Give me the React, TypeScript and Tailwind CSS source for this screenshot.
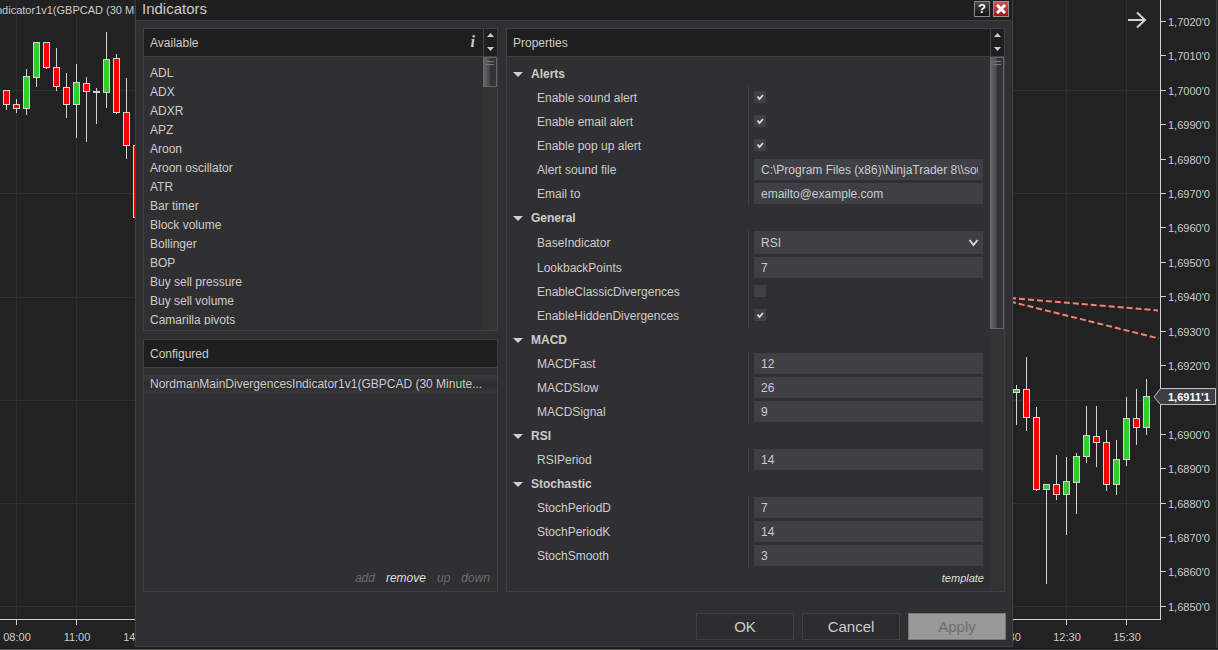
import React, { useState } from 'react';

const AVAILABLE = [
  'ADL',
  'ADX',
  'ADXR',
  'APZ',
  'Aroon',
  'Aroon oscillator',
  'ATR',
  'Bar timer',
  'Block volume',
  'Bollinger',
  'BOP',
  'Buy sell pressure',
  'Buy sell volume',
  'Camarilla pivots',
];

type Field = { id: string; label: string; kind: 'check' | 'text' | 'select' };

const GROUPS: { title: string; fields: Field[] }[] = [
  {
    title: 'Alerts',
    fields: [
      { id: 'soundAlert', label: 'Enable sound alert', kind: 'check' },
      { id: 'emailAlert', label: 'Enable email alert', kind: 'check' },
      { id: 'popupAlert', label: 'Enable pop up alert', kind: 'check' },
      { id: 'soundFile', label: 'Alert sound file', kind: 'text' },
      { id: 'emailTo', label: 'Email to', kind: 'text' },
    ],
  },
  {
    title: 'General',
    fields: [
      { id: 'baseIndicator', label: 'BaseIndicator', kind: 'select' },
      { id: 'lookbackPoints', label: 'LookbackPoints', kind: 'text' },
      { id: 'classicDiv', label: 'EnableClassicDivergences', kind: 'check' },
      { id: 'hiddenDiv', label: 'EnableHiddenDivergences', kind: 'check' },
    ],
  },
  {
    title: 'MACD',
    fields: [
      { id: 'macdFast', label: 'MACDFast', kind: 'text' },
      { id: 'macdSlow', label: 'MACDSlow', kind: 'text' },
      { id: 'macdSignal', label: 'MACDSignal', kind: 'text' },
    ],
  },
  {
    title: 'RSI',
    fields: [{ id: 'rsiPeriod', label: 'RSIPeriod', kind: 'text' }],
  },
  {
    title: 'Stochastic',
    fields: [
      { id: 'stochD', label: 'StochPeriodD', kind: 'text' },
      { id: 'stochK', label: 'StochPeriodK', kind: 'text' },
      { id: 'stochSmooth', label: 'StochSmooth', kind: 'text' },
    ],
  },
];

// x, body top, body bottom, wick top, wick bottom, rising
type Candle = [number, number, number, number, number, boolean];

const CANDLES: Candle[] = [
  [6, 90, 104, 90, 110, false],
  [16, 104, 108, 99, 113, false],
  [26, 76, 108, 69, 115, true],
  [36, 42, 77, 42, 87, true],
  [46, 42, 67, 42, 69, false],
  [56, 67, 86, 48, 91, false],
  [66, 87, 104, 73, 118, false],
  [76, 82, 104, 64, 138, true],
  [86, 83, 91, 77, 142, false],
  [96, 91, 92, 88, 124, true],
  [106, 59, 92, 32, 108, true],
  [116, 58, 112, 54, 114, false],
  [126, 112, 145, 78, 159, false],
  [136, 145, 217, 145, 218, false],
  [1016, 389, 392, 385, 425, true],
  [1026, 389, 417, 357, 431, false],
  [1036, 417, 489, 407, 491, false],
  [1046, 484, 489, 484, 584, true],
  [1056, 484, 494, 455, 500, false],
  [1066, 481, 494, 457, 535, true],
  [1076, 456, 482, 453, 514, true],
  [1086, 435, 456, 406, 463, true],
  [1096, 436, 442, 406, 467, false],
  [1106, 442, 484, 430, 491, false],
  [1116, 459, 484, 440, 495, true],
  [1126, 418, 459, 397, 466, true],
  [1136, 418, 427, 389, 445, false],
  [1146, 396, 427, 379, 435, true],
];

// the 1,6910'0 slot is left blank, the last price marker sits on it
const PRICES = [
  "1,7020'0", "1,7010'0", "1,7000'0", "1,6990'0", "1,6980'0", "1,6970'0",
  "1,6960'0", "1,6950'0", "1,6940'0", "1,6930'0", "1,6920'0", '',
  "1,6900'0", "1,6890'0", "1,6880'0", "1,6870'0", "1,6860'0", "1,6850'0",
];

const TIMES = [
  { x: 16, label: '08:00' },
  { x: 76, label: '11:00' },
  { x: 136, label: '14:00' },
  { x: 1006, label: '09:30' },
  { x: 1066, label: '12:30' },
  { x: 1126, label: '15:30' },
];

function PriceChart() {
  return (
    <svg className="absolute top-0 left-0" width="1218" height="650" viewBox="0 0 1218 650" aria-label="Price chart">
      <g stroke="#2f2f31" shapeRendering="crispEdges">
        {[90, 193, 297, 400, 503, 606].map((y) => (
          <line key={y} x1="0" x2="1160" y1={y + 0.5} y2={y + 0.5} />
        ))}
        {TIMES.map((t) => (
          <line key={t.x} x1={t.x + 0.5} x2={t.x + 0.5} y1="0" y2="617" />
        ))}
      </g>

      <text x="-4" y="14" fontSize="11" fill="#ccc">ndicator1v1(GBPCAD (30 Mi</text>

      <g stroke="#d3d3d3" shapeRendering="crispEdges">
        {CANDLES.map(([x, top, bottom, high, low, up]) => (
          <g key={x}>
            <line x1={x + 0.5} x2={x + 0.5} y1={high} y2={low} />
            <rect x={x - 2.5} y={top + 0.5} width="6" height={bottom - top} fill={up ? '#32cd32' : '#ff0000'} />
          </g>
        ))}
      </g>

      <g stroke="#fa8072" strokeWidth="2" strokeDasharray="6 3">
        <line x1="1010" y1="298" x2="1158" y2="310.5" />
        <line x1="1010" y1="301.5" x2="1159" y2="338.5" />
      </g>

      <path d="M1128 20H1145M1137 12.5L1145 20L1137 27.5" fill="none" stroke="#d3d3d3" strokeWidth="2" />

      <g stroke="#d3d3d3" shapeRendering="crispEdges">
        <path d="M1160.5 0V619.5H0" fill="none" />
        {PRICES.map((p, i) => {
          const y = Math.round(21 + i * 34.4) + 0.5;
          return <line key={i} x1="1161" x2="1166" y1={y} y2={y} />;
        })}
        {TIMES.map((t) => (
          <line key={t.x} x1={t.x + 0.5} x2={t.x + 0.5} y1="620" y2="625" />
        ))}
      </g>
      <g fontSize="11" fill="#ccc">
        {PRICES.map((p, i) => p && (
          <text key={i} x="1168" y={Math.round(26 + i * 34.4)}>{p}</text>
        ))}
        {TIMES.map((t) => (
          <text key={t.x} x={t.x + 1} y="641" textAnchor="middle">{t.label}</text>
        ))}
      </g>

      <path d="M1154 397L1160.5 388.5H1215.5V404.5H1160.5Z" fill="#3f3f46" stroke="#c0c0c0" />
      <text x="1168" y="401" fontSize="11" fontWeight="bold" fill="#fff">1,6911'1</text>

      <g shapeRendering="crispEdges">
        <line x1="1216.5" x2="1216.5" y1="0" y2="650" stroke="#3f3f46" />
        <line x1="0" x2="1218" y1="648.5" y2="648.5" stroke="#1a1a1a" />
        <line x1="0" x2="640" y1="649.5" y2="649.5" stroke="#5a5555" />
        <line x1="640" x2="1218" y1="649.5" y2="649.5" stroke="#3a3a3c" />
      </g>
    </svg>
  );
}

function Spinner() {
  return (
    <div className="flex w-3.5 shrink-0 flex-col items-center justify-between border-l border-[#3f3f46] py-1">
      <button type="button" aria-label="Move up">
        <svg className="block" width="7" height="4"><path d="M3.5 0L7 4H0Z" fill="#ccc" /></svg>
      </button>
      <button type="button" aria-label="Move down" className="mb-px">
        <svg className="block" width="7" height="4"><path d="M3.5 4L7 0H0Z" fill="#ccc" /></svg>
      </button>
    </div>
  );
}

function ScrollTrack({ thumb }: { thumb: string }) {
  return (
    <div className="w-3.5 shrink-0 bg-[#333333]">
      <div className={`flex flex-col items-center gap-0.5 border border-[#66666a] bg-linear-to-r from-[#68686a] from-0% via-[#444446] via-50% to-[#333335] to-50% pt-[3px] ${thumb}`}>
        <span className="h-px w-2 bg-[#777]" />
        <span className="h-px w-2 bg-[#777]" />
      </div>
    </div>
  );
}

function PanelHeader({ title, children }: { title: string; children?: React.ReactNode }) {
  return (
    <div className="flex h-7 shrink-0 border-b border-[#3f3f46] bg-[#1f1f1f] pl-1.5">
      <h2 className="grow leading-7">{title}</h2>
      {children}
    </div>
  );
}

export default function App() {
  const [selected, setSelected] = useState('');
  const [values, setValues] = useState<Record<string, string>>({
    soundFile: 'C:\\Program Files (x86)\\NinjaTrader 8\\\\sounds\\Alert1.wav',
    emailTo: 'emailto@example.com',
    baseIndicator: 'RSI',
    lookbackPoints: '7',
    macdFast: '12',
    macdSlow: '26',
    macdSignal: '9',
    rsiPeriod: '14',
    stochD: '7',
    stochK: '14',
    stochSmooth: '3',
  });
  const [checks, setChecks] = useState<Record<string, boolean>>({
    soundAlert: true,
    emailAlert: true,
    popupAlert: true,
    classicDiv: false,
    hiddenDiv: true,
  });

  const setValue = (id: string, value: string) => setValues({ ...values, [id]: value });

  const renderField = (field: Field) => {
    if (field.kind === 'check') {
      return (
        <span className="relative mb-px block h-3 w-3">
          <input
            id={field.id}
            type="checkbox"
            checked={checks[field.id]}
            onChange={(e) => setChecks({ ...checks, [field.id]: e.target.checked })}
            className="block h-3 w-3 appearance-none bg-[#3f3f46]"
          />
          {checks[field.id] && (
            <svg className="pointer-events-none absolute top-0 left-0" width="12" height="12">
              <path d="M3.5 5.5L5.5 8L9 4" fill="none" stroke="#ddd" strokeWidth="1.8" />
            </svg>
          )}
        </span>
      );
    }
    if (field.kind === 'select') {
      return (
        <span className="relative block w-full">
          <select
            id={field.id}
            value={values[field.id]}
            onChange={(e) => setValue(field.id, e.target.value)}
            className="block h-[23px] w-full appearance-none bg-[#3f3f46] px-[7px] outline-none"
          >
            <option>RSI</option>
            <option>MACD</option>
            <option>Stochastic</option>
          </select>
          <svg className="pointer-events-none absolute top-2 right-1" width="11" height="8">
            <path d="M1.5 1L5.5 6L9.5 1" fill="none" stroke="#d8d8d8" strokeWidth="2" />
          </svg>
        </span>
      );
    }
    return (
      <span className="block w-full bg-[#3f3f46] pr-[5px] pl-[7px]">
        <input
          id={field.id}
          type="text"
          value={values[field.id]}
          onChange={(e) => setValue(field.id, e.target.value)}
          className="block h-[21px] w-full bg-transparent outline-none"
        />
      </span>
    );
  };

  return (
    <main className="relative flex min-h-screen overflow-hidden bg-[#222222] pr-[205px] pb-[3px] pl-[135px] font-['Liberation_Sans',Arial,sans-serif] text-xs text-[#cccccc]">
      <PriceChart />

      <section className="relative flex min-w-0 grow flex-col border-x border-b border-[#3f3f46] bg-[#303032]">
        <header className="flex h-[21px] items-start justify-between border-b border-[#3f3f46] bg-[#1f1f1f] pr-[3px] pl-1.5">
          <h1 className="text-[15px] leading-[18px]">Indicators</h1>
          <div className="flex gap-[3px] pt-px">
            <button type="button" aria-label="Help" className="h-4 w-4 border border-[#8a8a8a] bg-linear-to-b from-[#48484a] to-[#111] text-[13px] leading-[14px] font-bold text-white">
              ?
            </button>
            <button type="button" aria-label="Close" className="flex h-4 w-4 items-center justify-center border border-[#a09090] bg-linear-to-b from-[#d05055] to-[#a81018]">
              <svg width="10" height="10"><path d="M1 1L9 9M9 1L1 9" stroke="#fff" strokeWidth="3" /></svg>
            </button>
          </div>
        </header>

        <div className="grid grow grid-cols-[355fr_499fr] gap-2 px-[7px] pt-[7px]">
          <div className="flex min-w-0 flex-col gap-2">
            <div className="flex h-[303px] flex-col border border-[#3f3f46]">
              <PanelHeader title="Available">
                <button type="button" aria-label="Indicator info" className="px-2 pb-0.5 font-['Liberation_Serif',serif] text-base font-bold italic">
                  i
                </button>
                <Spinner />
              </PanelHeader>
              <div className="flex min-h-0 grow">
                <ul className="mt-[7px] mb-[5px] grow overflow-hidden">
                  {AVAILABLE.map((name) => (
                    <li key={name}>
                      <button
                        type="button"
                        onClick={() => setSelected(name)}
                        className={`block w-full pl-1.5 text-left leading-[19px] ${selected === name ? 'bg-[#3a3a3c]' : ''}`}
                      >
                        {name}
                      </button>
                    </li>
                  ))}
                </ul>
                <ScrollTrack thumb="h-[30px]" />
              </div>
            </div>

            <div className="flex grow flex-col border border-[#3f3f46]">
              <PanelHeader title="Configured" />
              <button type="button" className="mt-[7px] truncate bg-linear-to-b from-[#3a3a3c] via-[#2d2d2f] to-[#39393b] px-1.5 text-left leading-[19px]">
                NordmanMainDivergencesIndicator1v1(GBPCAD (30 Minute...
              </button>
              <div className="mt-auto flex justify-end gap-[11px] px-[7px] pb-1 text-[#6a6a6c] italic leading-[18px]">
                <button type="button">add</button>
                <button type="button" className="text-[#dddddd]">remove</button>
                <button type="button">up</button>
                <button type="button">down</button>
              </div>
            </div>
          </div>

          <div className="flex min-w-0 flex-col border border-[#3f3f46]">
            <PanelHeader title="Properties">
              <Spinner />
            </PanelHeader>
            <div className="flex grow">
              <div className="flex min-w-0 grow flex-col pt-[5px]">
                {GROUPS.map((group) => (
                  <div key={group.title}>
                    <h3 className="flex h-6 items-center gap-2 pl-1.5 font-bold">
                      <svg width="10" height="5"><path d="M0 0H10L5 5Z" fill="#d0d0d0" /></svg>
                      {group.title}
                    </h3>
                    {group.fields.map((field) => (
                      <div key={field.id} className={`grid grid-cols-[241fr_242fr] ${field.kind === 'select' ? 'h-[26px]' : 'h-6'}`}>
                        <label htmlFor={field.id} className="self-center pl-[30px]">{field.label}</label>
                        <div className="flex min-w-0 items-center border-l border-[#3f3f46] pr-[7px] pb-px pl-[5px]">
                          {renderField(field)}
                        </div>
                      </div>
                    ))}
                  </div>
                ))}
                <a href="#template" className="mr-1.5 self-end text-[11px] leading-5 text-[#dddddd] italic">template</a>
              </div>
              <ScrollTrack thumb="h-[272px]" />
            </div>
          </div>
        </div>

        <footer className="flex justify-end gap-2 pt-[21px] pr-1.5 pb-1.5 text-[15px]">
          <button type="button" className="h-[27px] w-[98px] border border-[#3f3f46] bg-[#2d2d2f]">OK</button>
          <button type="button" className="h-[27px] w-[98px] border border-[#3f3f46] bg-[#2d2d2f]">Cancel</button>
          <button type="button" disabled className="h-[27px] w-[98px] border border-[#77777a] bg-[#999999] text-[#6e6e6e]">Apply</button>
        </footer>
      </section>
    </main>
  );
}
